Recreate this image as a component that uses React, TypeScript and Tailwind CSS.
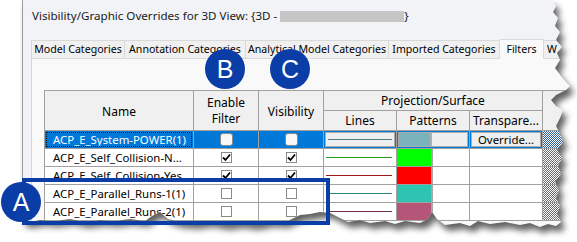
import React from "react";

type Row = {
  name: string;
  on: boolean;
  line: string;
  fill: string;
};

const rows: Row[] = [
  { name: "ACP_E_Self_Collision-N...", on: true, line: "#1f9e1f", fill: "#00ff00" },
  { name: "ACP_E_Self_Collision-Yes...", on: true, line: "#a01818", fill: "#ff0000" },
  { name: "ACP_E_Parallel_Runs-1(1)", on: false, line: "#2a8a78", fill: "#2ec4b1" },
  { name: "ACP_E_Parallel_Runs-2(1)", on: false, line: "#7a3050", fill: "#b55578" },
];

const tabs = [
  { label: "Model Categories", w: "w-[94px] border-l" },
  { label: "Annotation Categories", w: "w-[121px]" },
  { label: "Analytical Model Categories", w: "w-[143px]" },
  { label: "Imported Categories", w: "w-[111px]" },
];

// paper outline, right edge then bottom edge
const edge = [
  [22, 0], [552, 0], [556, 6], [553, 12], [558, 18], [555, 26], [560, 32], [556, 40],
  [562, 47], [557, 53], [560, 60], [555, 68], [561, 76], [566, 82], [570, 86], [566, 90],
  [556, 95], [551, 100], [556, 106], [563, 110], [560, 118], [556, 126], [560, 134],
  [563, 142], [557, 150], [562, 158], [558, 166], [561, 174], [555, 182], [559, 190],
  [556, 198], [560, 206], [557, 214], [561, 222], [556, 226], [548, 224], [540, 227],
  [530, 223], [520, 225], [505, 222], [490, 224], [478, 221], [470, 226], [460, 223],
  [445, 225], [437, 219], [432, 212], [428, 219], [420, 223], [405, 221], [395, 224],
  [385, 221], [370, 223], [360, 220], [348, 222], [338, 217], [330, 213], [320, 212],
  [310, 214], [300, 215], [292, 219], [285, 222], [270, 221], [255, 224], [240, 222],
  [225, 224], [210, 221], [195, 223], [180, 222], [168, 219], [160, 212], [152, 216],
  [145, 221], [130, 219], [115, 221], [100, 220], [85, 222], [70, 219], [55, 221],
  [40, 220], [30, 222], [22, 221],
];
const paper = "M" + edge.map((p) => p.join(" ")).join(" L") + " Z";

const Check = () => (
  <svg width="9" height="9" viewBox="0 0 9 9">
    <path d="M1 4.5 L3.5 7 L8 1.5" fill="none" stroke="#000" strokeWidth="1.8" />
  </svg>
);

const Box = ({ on }: { on: boolean }) => (
  <div className="w-[11px] h-[11px] border border-[#8a8a8a] bg-white flex items-center justify-center">
    {on && <Check />}
  </div>
);

const Torn = () => (
  <svg className="absolute left-0 top-0" width="577" height="242" viewBox="0 0 577 242">
    <defs>
      <clipPath id="outside">
        <path d={"M0 0 H577 V242 H0 Z " + paper} clipRule="evenodd" />
      </clipPath>
      <filter id="blur" x="-10%" y="-10%" width="120%" height="120%">
        <feGaussianBlur stdDeviation="3" />
      </filter>
    </defs>
    <path d={"M0 0 H577 V242 H0 Z " + paper} fill="#fff" fillRule="evenodd" />
    <g clipPath="url(#outside)">
      <path d={paper} fill="#3a3a3a" opacity="0.8" transform="translate(4 6)" filter="url(#blur)" />
    </g>
  </svg>
);

const Badge = ({ letter, cls }: { letter: string; cls: string }) => (
  <div
    className={`absolute w-[40px] h-[40px] rounded-full bg-[#0b3da6] text-white flex items-center justify-center text-[25px] leading-none font-['Liberation_Sans',sans-serif] ${cls}`}
  >
    {letter}
  </div>
);

export default function App() {
  return (
    <div className="relative w-[577px] h-[242px] bg-white overflow-hidden font-['Noto_Sans',sans-serif] text-black">
      <div className="ml-[22px] w-[555px] h-full border-l border-[#9a9a9a] bg-[#f1f3f7] flex flex-col">
        <div className="h-[32px] flex items-center pl-[9px] text-[11.6px] text-[#1a1a1a] whitespace-nowrap">
          Visibility/Graphic Overrides for 3D View: {"{"}3D -&nbsp;
          <span className="inline-block w-[124px] h-[11px] bg-[#c6c6c6]" />
          {"}"}
        </div>
        <div className="h-[26px] flex items-end pl-[8px] text-[10.6px] whitespace-nowrap">
          {tabs.map((t) => (
            <div
              key={t.label}
              className={`h-[18px] shrink-0 flex items-center justify-center border-t border-r border-[#d9d9d9] bg-[#f0f0f0] ${t.w}`}
            >
              {t.label}
            </div>
          ))}
          <div className="h-[20px] w-[44px] shrink-0 flex items-center justify-center bg-[#f9f9f9] border-t border-r border-[#d9d9d9] -mb-px relative">
            Filters
          </div>
          <div className="h-[18px] w-[40px] shrink-0 pl-[3px] flex items-center border-t border-[#d9d9d9] bg-[#f0f0f0]">
            W
          </div>
        </div>
        <div className="flex-1 ml-[8px] border-l border-t border-[#d9d9d9] bg-[#f9f9f9] pt-[31px] pl-[12px]">
          <div className="border-l border-t border-[#a0a0a0] text-[11.4px] whitespace-nowrap">
            <div className="flex h-[40px] border-b border-[#a0a0a0] bg-[#f0f0f0]">
              <div className="w-[149px] shrink-0 border-r border-[#a0a0a0] flex items-center justify-center text-[12px] pt-[2px]">
                Name
              </div>
              <div className="w-[65px] shrink-0 border-r border-[#a0a0a0] flex flex-col items-center justify-center text-[12px]">
                <span className="leading-[16px]">Enable</span>
                <span className="leading-[16px]">Filter</span>
              </div>
              <div className="w-[65px] shrink-0 border-r border-[#a0a0a0] flex items-center justify-center text-[12px] pt-[3px]">
                Visibility
              </div>
              <div className="w-[219px] shrink-0 border-r border-[#a0a0a0] flex flex-col text-[12px]">
                <div className="h-[20px] border-b border-[#a0a0a0] flex items-center justify-center">
                  Projection/Surface
                </div>
                <div className="h-[19px] flex">
                  <div className="w-[73px] border-r border-[#a0a0a0] flex items-center justify-center">Lines</div>
                  <div className="w-[73px] border-r border-[#a0a0a0] flex items-center justify-center">Patterns</div>
                  <div className="w-[72px] flex items-center justify-center">Transpare...</div>
                </div>
              </div>
              <div className="w-[40px] shrink-0" />
            </div>

            <div className="flex h-[18px] border-b border-[#a0a0a0]">
              <div className="w-[149px] shrink-0 border-r border-[#a0a0a0] bg-[#0078d7] p-[1px]">
                <div className="h-full border border-dotted border-[#1a1a1a] text-white flex items-center pl-[6px] overflow-hidden">
                  ACP_E_System-POWER(1)
                </div>
              </div>
              <div className="w-[65px] shrink-0 border-r border-[#a0a0a0] bg-[#0078d7] flex items-center justify-center">
                <div className="w-[13px] h-[13px] rounded-[3px] border border-[#8a8a8a] bg-[#f8f8f8]" />
              </div>
              <div className="w-[65px] shrink-0 border-r border-[#a0a0a0] bg-[#0078d7] flex items-center justify-center">
                <div className="w-[13px] h-[13px] rounded-[3px] border border-[#8a8a8a] bg-[#f8f8f8]" />
              </div>
              <div className="w-[73px] shrink-0 border-r border-[#a0a0a0] bg-[#0078d7] p-[1px]">
                <div className="h-full bg-[#eeeeee] border border-[#adadad] flex items-center px-[2px]">
                  <div className="w-full h-px bg-[#4a7f89]" />
                </div>
              </div>
              <div className="w-[73px] shrink-0 border-r border-[#a0a0a0] bg-[#0078d7] p-[1px]">
                <div className="h-full bg-[#eeeeee] border border-[#adadad] flex">
                  <div className="w-[33px] h-full bg-[#7ab4ba] border-r-2 border-[#b0b0b0]" />
                </div>
              </div>
              <div className="w-[73px] shrink-0 border-r border-[#a0a0a0] bg-[#0078d7] p-[1px]">
                <div className="h-full bg-[#eeeeee] border border-[#adadad] flex items-center justify-center">
                  Override...
                </div>
              </div>
              <div className="w-[40px] shrink-0 bg-[repeating-conic-gradient(#2f5f9a_0_25%,#ffffff_0_50%)] bg-[length:2px_2px]" />
            </div>

            {rows.map((r) => (
              <div key={r.name} className="flex h-[18px] border-b border-[#a0a0a0] bg-white">
                <div className="w-[149px] shrink-0 border-r border-[#a0a0a0] flex items-center pl-[8px] overflow-hidden">
                  {r.name}
                </div>
                <div className="w-[65px] shrink-0 border-r border-[#a0a0a0] flex items-center justify-center">
                  <Box on={r.on} />
                </div>
                <div className="w-[65px] shrink-0 border-r border-[#a0a0a0] flex items-center justify-center">
                  <Box on={r.on} />
                </div>
                <div className="w-[73px] shrink-0 border-r border-[#a0a0a0] flex items-center pl-[2px] pr-[4px]">
                  <div className="w-full h-px" style={{ backgroundColor: r.line }} />
                </div>
                <div className="w-[73px] shrink-0 border-r border-[#a0a0a0] flex">
                  <div className="w-[36px] h-full border-r-2 border-[#a8a8a8]" style={{ backgroundColor: r.fill }} />
                </div>
                <div className="w-[73px] shrink-0 border-r border-[#a0a0a0]" />
                <div className="w-[40px] shrink-0 bg-[repeating-conic-gradient(#6b6b6b_0_25%,#ffffff_0_50%)] bg-[length:2px_2px]" />
              </div>
            ))}
          </div>
        </div>
      </div>

      <Torn />

      <div className="absolute left-[22px] top-[178px] w-[308px] h-[47px] border-4 border-[#0b3da6]" />
      <Badge letter="A" cls="left-[1px] top-[182px]" />
      <Badge letter="B" cls="left-[205px] top-[49px]" />
      <Badge letter="C" cls="left-[270px] top-[49px]" />
    </div>
  );
}
